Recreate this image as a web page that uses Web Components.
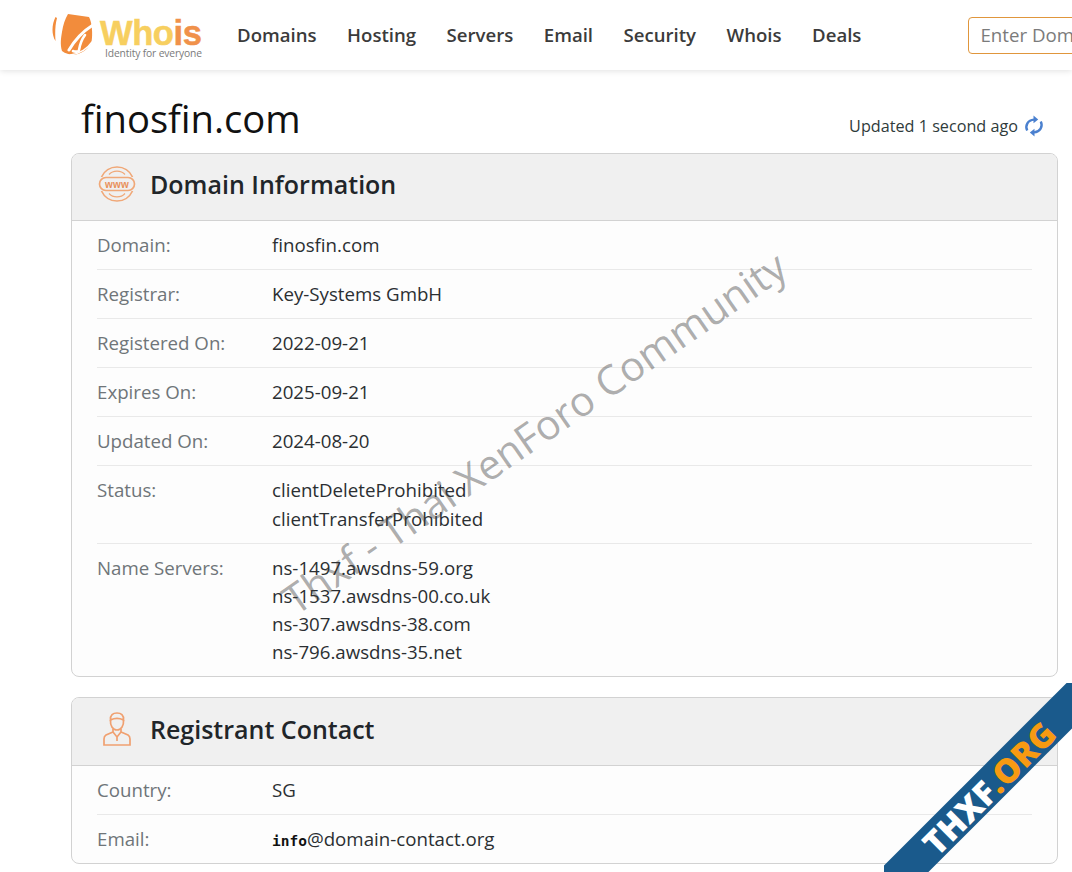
<!DOCTYPE html>
<html>
<head>
<meta charset="utf-8">
<title>finosfin.com</title>
<style>
  html, body { margin: 0; padding: 0; height: 872px; overflow: hidden; background: #fff; }
  body { font-family: "Open Sans", sans-serif; position: relative; }
</style>
</head>
<body>
<site-header></site-header>
<page-title updated="Updated 1 second ago">finosfin.com</page-title>

<info-card heading="Domain Information" icon="www">
  <info-row label="Domain:">finosfin.com</info-row>
  <info-row label="Registrar:">Key-Systems GmbH</info-row>
  <info-row label="Registered On:">2022-09-21</info-row>
  <info-row label="Expires On:">2025-09-21</info-row>
  <info-row label="Updated On:">2024-08-20</info-row>
  <info-row label="Status:" style="line-height: 28.5px">clientDeleteProhibited<br>clientTransferProhibited</info-row>
  <info-row label="Name Servers:" last>ns-1497.awsdns-59.org<br>ns-1537.awsdns-00.co.uk<br>ns-307.awsdns-38.com<br>ns-796.awsdns-35.net</info-row>
</info-card>

<info-card heading="Registrant Contact" icon="person" style="--gap: 20px; --head: 68px; --lift: 5px">
  <info-row label="Country:">SG</info-row>
  <info-row label="Email:" last><b style="font: bold 14.5px 'DejaVu Sans Mono', monospace; color: #111">info</b>@domain-contact.org</info-row>
</info-card>

<water-mark>Thxf - Thai XenForo Community</water-mark>
<corner-ribbon></corner-ribbon>

<script>
class SiteHeader extends HTMLElement {
  constructor() {
    super();
    this.attachShadow({ mode: "open" });
    const links = ["Domains", "Hosting", "Servers", "Email", "Security", "Whois", "Deals"];
    this.shadowRoot.innerHTML = `
      <style>
        :host {
          display: flex;
          align-items: center;
          height: 70px;
          padding-left: 52px;
          background: #fff;
          box-shadow: 0 1px 6px rgba(0,0,0,.12);
          position: relative;
          white-space: nowrap;
          overflow: hidden;
          font-family: "Open Sans", sans-serif;
        }
        .logo { display: flex; align-items: flex-start; width: 185px; flex: none; height: 42px; margin-top: -2px; }
        .logo svg { width: 41px; height: 42px; flex: none; margin-top: 1px; }
        .brand { margin-left: 7px; width: 110px; }
        .word {
          font: 700 34.6px/30px "Liberation Sans", sans-serif;
          letter-spacing: -.45px;
          color: #f7cf5f;
          margin-top: 5px;
          height: 29px;
          -webkit-text-stroke: .5px currentColor;
        }
        .word span { color: #f0914a; }
        .tag { font: 400 10.3px/12px "Open Sans", sans-serif; color: #7a7a7a; margin-left: 5px; letter-spacing: -.15px; }
        nav { display: flex; gap: 30.5px; margin-top: -2px; }
        nav a { font-size: 18.6px; font-weight: 600; color: #3b3b3b; }
        .search {
          margin-left: 107px;
          width: 200px;
          flex: none;
          height: 37px;
          box-sizing: border-box;
          border: 1px solid #e0963c;
          border-radius: 4px;
          padding-left: 11px;
          font-size: 18.7px;
          line-height: 33px;
          color: #7b7b7b;
        }
      </style>
      <div class="logo">
        <svg viewBox="0 0 41 42">
          <path d="M3.5 3 C0 10 -1 20 3.5 27 C3 20 3 11 5 4 Z" fill="#f28c3c"/>
          <path d="M16 0 L37 3 C40 8 41 20 39.5 28 C37 34 31 39 24 40.5 C19 41 14 40 10 37 C8 30 9 24 10 18 C11 11 13 5 16 0 Z" fill="#f28c3c"/>
          <g fill="none" stroke="#fff" stroke-linecap="round">
            <path d="M41 11 C33 16 24 24 17 36" stroke-width="3"/>
            <path d="M33 21 C30 25 28 30 27 36 C27 38 23 38 21 37" stroke-width="2.6"/>
            <path d="M40 28 C36 34 28 40 18 41" stroke-width="1.5"/>
          </g>
        </svg>
        <div class="brand">
          <div class="word">Who<span>is</span></div>
          <div class="tag">Identity for everyone</div>
        </div>
      </div>
      <nav>${links.map(l => `<a>${l}</a>`).join("")}</nav>
      <div class="search">Enter Domain</div>`;
  }
}

class PageTitle extends HTMLElement {
  constructor() {
    super();
    this.attachShadow({ mode: "open" });
  }
  connectedCallback() {
    this.shadowRoot.innerHTML = `
      <style>
        :host {
          display: flex;
          justify-content: space-between;
          height: 83px;
          margin-left: 81px;
          margin-right: 28px;
          box-sizing: border-box;
          font-family: "Open Sans", sans-serif;
        }
        h1 { margin: 23px 0 0; font-size: 38.2px; line-height: 50px; font-weight: 500; color: #111; }
        .upd { display: flex; align-items: center; gap: 6px; margin-top: 42px; height: 28px; font-size: 16.2px; color: #2f3b3b; }
        svg { width: 20px; height: 22px; }
      </style>
      <h1><slot></slot></h1>
      <div class="upd">${this.getAttribute("updated")}
        <svg viewBox="0 0 20 22" fill="none" stroke="#4a80cf" stroke-width="2.4">
          <path d="M3.2 15.5 C0.8 10.5 3.8 5 10 4.6"/>
          <path d="M16.8 6.5 C19.2 11.5 16.2 17 10 17.4"/>
          <path d="M9.5 0.6 L14.2 4.4 L9.5 8.2 Z" fill="#4a80cf" stroke="none"/>
          <path d="M10.5 13.8 L5.8 17.6 L10.5 21.4 Z" fill="#4a80cf" stroke="none"/>
        </svg>
      </div>`;
  }
}

const CARD_ICONS = {
  www: `<svg width="38" height="36" viewBox="0 0 38 36" fill="none" stroke="#f0a878" stroke-width="1.7">
      <path d="M3.5 11 A17 17 0 0 1 34.5 11"/>
      <path d="M3.5 25 A17 17 0 0 0 34.5 25"/>
      <path d="M11 8.5 C15 4 23 4 27 8.5 M11 27.5 C15 32 23 32 27 27.5" stroke-width="1.2"/>
      <rect x="1.5" y="11.5" width="35" height="13" rx="6.5"/>
      <text x="19" y="21.6" text-anchor="middle" font-family="Liberation Sans, sans-serif" font-weight="700" font-size="10" letter-spacing=".3" fill="#e8915a" stroke="none">www</text>
    </svg>`,
  person: `<svg width="28" height="34" viewBox="0 0 28 34" fill="none" stroke="#f0a070" stroke-width="1.7">
      <path d="M7.5 8 C7 3 10 1 14 1 C18 1 21 3 20.5 8 C16 5.8 12 5.8 7.5 8 Z"/>
      <path d="M7.5 8 C7 14 10 18 14 18 C18 18 21 14 20.5 8"/>
      <path d="M10 17 L10 20 L3 23 C1.5 24 1 25.5 1 27 L1 33 L27 33 L27 27 C27 25.5 26.5 24 25 23 L18 20 L18 17"/>
      <path d="M10 20 L14 25 L18 20 M14 25 L14 29"/>
    </svg>`
};

class InfoCard extends HTMLElement {
  constructor() {
    super();
    this.attachShadow({ mode: "open" });
  }
  connectedCallback() {
    this.shadowRoot.innerHTML = `
      <style>
        :host {
          display: block;
          margin: var(--gap, 0) 14px 0 71px;
          box-sizing: border-box;
          border: 1px solid #d2d2d2;
          border-radius: 8px;
          overflow: hidden;
          background: #fdfdfd;
          font-family: "Open Sans", sans-serif;
        }
        header {
          display: flex;
          align-items: center;
          height: var(--head, 67px);
          box-sizing: border-box;
          padding-bottom: var(--lift, 7px);
          border-bottom: 1px solid #d2d2d2;
          background: #f0f0f0;
        }
        .ico { width: 78px; flex: none; display: flex; justify-content: center; padding-left: 12px; box-sizing: border-box; }
        h2 { margin: 0; font-size: 25px; font-weight: 600; color: #212529; }
        .rows { padding: 0 25px; }
      </style>
      <header><div class="ico">${CARD_ICONS[this.getAttribute("icon")]}</div><h2>${this.getAttribute("heading")}</h2></header>
      <div class="rows"><slot></slot></div>`;
  }
}

class InfoRow extends HTMLElement {
  constructor() {
    super();
    this.attachShadow({ mode: "open" });
  }
  connectedCallback() {
    this.shadowRoot.innerHTML = `
      <style>
        :host {
          display: grid;
          grid-template-columns: 175px 1fr;
          padding: 10px 0;
          border-bottom: 1px solid #e9e9e9;
          font-size: 18.7px;
          line-height: 28px;
          color: #2b2f32;
        }
        :host([last]) { border-bottom: 0; }
        .k { color: #6f7579; }
      </style>
      <div class="k">${this.getAttribute("label")}</div>
      <div><slot></slot></div>`;
  }
}

class WaterMark extends HTMLElement {
  constructor() {
    super();
    this.attachShadow({ mode: "open" }).innerHTML = `
      <style>
        :host {
          position: absolute;
          left: 287px;
          top: 573px;
          font: 400 41px/60px "Open Sans", sans-serif;
          color: rgba(60,60,60,.42);
          white-space: nowrap;
          transform: rotate(-34.7deg);
          transform-origin: 0 50%;
          pointer-events: none;
        }
      </style><slot></slot>`;
  }
}

class CornerRibbon extends HTMLElement {
  constructor() {
    super();
    this.attachShadow({ mode: "open" }).innerHTML = `
      <style>
        :host { position: absolute; right: 0; bottom: 0; width: 188px; height: 189px; overflow: hidden; pointer-events: none; }
        .band {
          position: absolute;
          left: -60px;
          top: 76px;
          width: 348px;
          height: 36px;
          padding-right: 28px;
          box-sizing: border-box;
          background: #1a5a8c;
          transform: rotate(-45deg);
          text-align: center;
          font: 800 33.5px/39px "Open Sans", sans-serif;
          color: #fff;
          white-space: nowrap;
        }
        span { color: #f79a12; }
      </style>
      <div class="band">THXF<span>.ORG</span></div>`;
  }
}

customElements.define("site-header", SiteHeader);
customElements.define("page-title", PageTitle);
customElements.define("info-card", InfoCard);
customElements.define("info-row", InfoRow);
customElements.define("water-mark", WaterMark);
customElements.define("corner-ribbon", CornerRibbon);
</script>
</body>
</html>
